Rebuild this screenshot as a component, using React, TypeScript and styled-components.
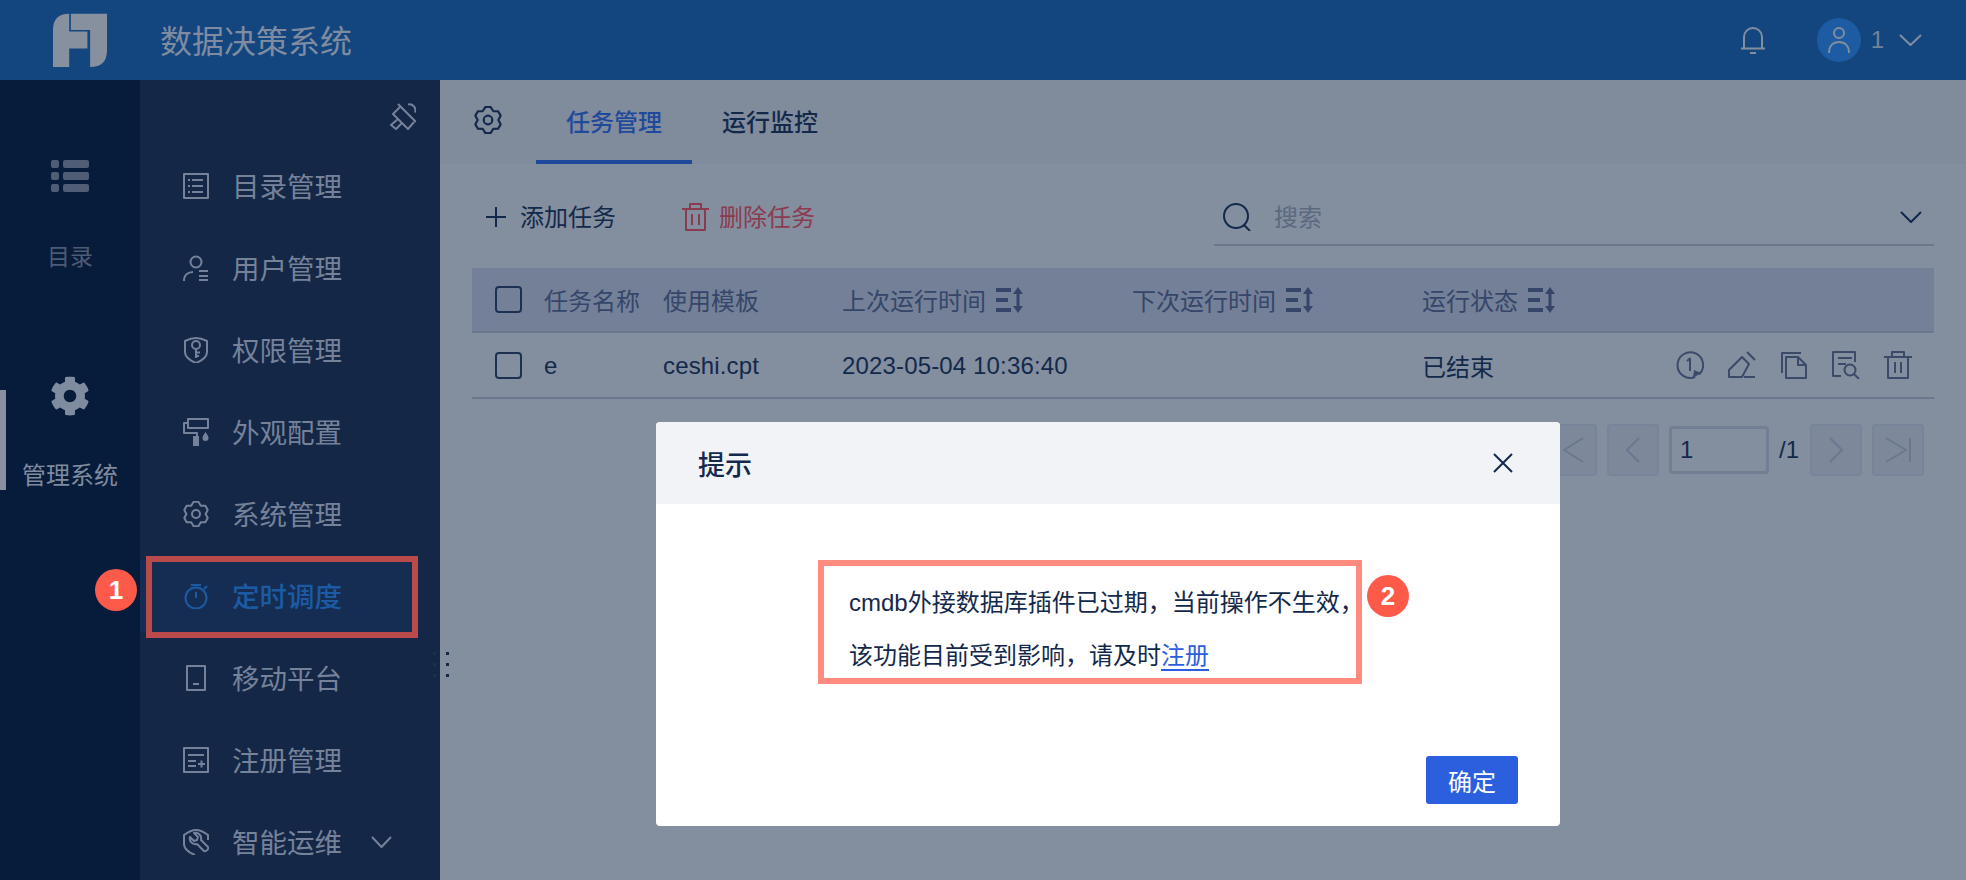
import React from "react";
import styled, { createGlobalStyle } from "styled-components";
import { FaCog } from "react-icons/fa";

const GlobalStyle = createGlobalStyle`
  html, body { margin: 0; padding: 0; background: #828d9e; }
  body { font-family: "Liberation Sans", "Noto Sans CJK SC", sans-serif; overflow: hidden; }
  * { box-sizing: border-box; }
`;

const Page = styled.div`
  position: relative;
  width: 1966px;
  height: 880px;
  display: flex;
  flex-direction: column;
  overflow: hidden;
`;

const TopBar = styled.header`
  height: 80px;
  flex: none;
  display: flex;
  align-items: center;
  background: #13467f;
  color: #828da0;
`;

const LogoBox = styled.div`
  width: 160px;
  padding-left: 53px;
  display: flex;
`;

const SystemName = styled.div`
  font-size: 32px;
  color: #7f8ba0;
  padding-bottom: 2px;
`;

const TopRight = styled.div`
  margin-left: auto;
  display: flex;
  align-items: center;
  padding-right: 44px;
`;

const Avatar = styled.div`
  width: 44px;
  height: 44px;
  margin-left: 51px;
  border-radius: 50%;
  background: #1d5ba2;
  display: flex;
  align-items: center;
  justify-content: center;
`;

const UserName = styled.span`
  font-size: 24px;
  color: #73829b;
  margin: 0 15px 0 10px;
`;

const Main = styled.div`
  flex: 1;
  display: flex;
  min-height: 0;
`;

const Rail = styled.nav`
  width: 140px;
  flex: none;
  padding-top: 76px;
  background: #071b3a;
`;

const RailItem = styled.div<{ $active?: boolean }>`
  position: relative;
  height: 220px;
  display: flex;
  flex-direction: column;
  align-items: center;
  color: ${(p) => (p.$active ? "#7f8b9e" : "#4f5d75")};
`;

const RailIcon = styled.div`
  height: 40px;
  display: flex;
  align-items: center;
  justify-content: center;
`;

const RailLabel = styled.div<{ $active?: boolean }>`
  margin-top: ${(p) => (p.$active ? "46px" : "47px")};
  font-size: ${(p) => (p.$active ? "24px" : "23px")};
  line-height: 28px;
  color: ${(p) => (p.$active ? "#7f8b9e" : "#4d5b74")};
`;

const RailMark = styled.span`
  position: absolute;
  left: 0;
  top: 14px;
  width: 6px;
  height: 100px;
  background: #87919f;
`;

const SideMenu = styled.nav`
  position: relative;
  width: 300px;
  flex: none;
  background: #142747;
`;

const PinRow = styled.div`
  height: 70px;
  display: flex;
  justify-content: flex-end;
  align-items: flex-end;
  padding: 0 24px 20px 0;
  color: #75829a;
`;

const MenuList = styled.div`
  display: flex;
  flex-direction: column;
  gap: 10px;
`;

const MenuItem = styled.div<{ $active?: boolean }>`
  height: 72px;
  margin-right: 22px;
  display: flex;
  align-items: center;
  gap: 23px;
  padding-left: 43px;
  font-size: 27.5px;
  font-weight: ${(p) => (p.$active ? 500 : 400)};
  color: ${(p) => (p.$active ? "#1c5ba3" : "#75829a")};
  background: ${(p) => (p.$active ? "#152d53" : "transparent")};
`;

const MenuLabel = styled.span`
  padding-bottom: 3px;
`;

const MenuChevron = styled.span`
  display: flex;
  margin-left: 6px;
`;

const MarkBox = styled.div<{ $color: string }>`
  position: absolute;
  border: 6px solid ${(p) => p.$color};
  pointer-events: none;
`;

const SideMark = styled(MarkBox)`
  left: 6px;
  top: 476px;
  width: 272px;
  height: 82px;
`;

const Badge = styled.div`
  position: absolute;
  width: 42px;
  height: 42px;
  border-radius: 50%;
  background: #fd5a4a;
  color: #fff;
  font-size: 26px;
  font-weight: 700;
  display: flex;
  align-items: center;
  justify-content: center;
`;

const BadgeOne = styled(Badge)`
  left: -45px;
  top: 489px;
`;

const BadgeTwo = styled(Badge)`
  left: 711px;
  top: 71px;
`;

const Handle = styled.div`
  position: absolute;
  left: 293px;
  top: 572px;
  display: grid;
  grid-template-columns: 3px 3px;
  column-gap: 10px;
  row-gap: 8px;
`;

const HandleDot = styled.i<{ $dim?: boolean }>`
  display: block;
  width: 3px;
  height: 3px;
  background: ${(p) => (p.$dim ? "#1d3050" : "#13294b")};
`;

const Content = styled.main`
  flex: 1;
  min-width: 0;
  background: #838e9f;
  color: #13294b;
`;

const TabBar = styled.div`
  height: 84px;
  display: flex;
  padding-left: 34px;
  background: #808b9c;
`;

const TabGear = styled.div`
  width: 62px;
  display: flex;
  align-items: center;
  padding-bottom: 4px;
`;

const Tab = styled.div<{ $active?: boolean }>`
  width: 156px;
  display: flex;
  align-items: center;
  justify-content: center;
  font-size: 24px;
  font-weight: 500;
  color: ${(p) => (p.$active ? "#1f4a9c" : "#13294b")};
  border-bottom: 4px solid ${(p) => (p.$active ? "#1f4a9c" : "transparent")};
`;

const Body = styled.div`
  padding: 0 32px;
`;

const Toolbar = styled.div`
  height: 104px;
  padding-top: 26px;
  display: flex;
  align-items: flex-start;
`;

const ToolButton = styled.div<{ $danger?: boolean; $gap: number }>`
  height: 54px;
  display: flex;
  align-items: center;
  gap: ${(p) => p.$gap}px;
  font-size: 24px;
  color: ${(p) => (p.$danger ? "#8b3b50" : "#13294b")};
`;

const ToolLabel = styled.span`
  padding-bottom: 4px;
`;

const AddButton = styled(ToolButton)`
  margin-left: 14px;
`;

const DeleteButton = styled(ToolButton)`
  margin-left: 66px;
`;

const SearchBox = styled.div`
  margin-left: auto;
  width: 720px;
  height: 56px;
  display: flex;
  align-items: center;
  gap: 22px;
  padding: 0 12px 0 9px;
  border-bottom: 2px solid #6b778d;
  font-size: 24px;
  color: #13294b;
`;

const SearchHint = styled(ToolLabel)`
  color: #5c697f;
`;

const SearchChevron = styled.span`
  display: flex;
  margin-left: auto;
`;

const Row = styled.div<{ $head?: boolean }>`
  display: grid;
  grid-template-columns: 72px 119px 179px 290px 290px 254px 1fr;
  align-items: center;
  height: ${(p) => (p.$head ? "65px" : "66px")};
  font-size: 24px;
  color: ${(p) => (p.$head ? "#36466a" : "#13294b")};
  background: ${(p) => (p.$head ? "#738097" : "transparent")};
  border-bottom: 2px solid #6b778d;
`;

const LatinCell = styled.div`
  padding-top: 2px;
  letter-spacing: 0.15px;
`;

const Check = styled.span`
  display: block;
  width: 27px;
  height: 27px;
  margin-left: 23px;
  border: 2px solid #1c3052;
  border-radius: 4px;
`;

const SortCell = styled.div`
  display: flex;
  align-items: center;
  gap: 10px;
`;

const RowActions = styled.div`
  display: flex;
  gap: 24px;
  color: #3a4a68;
`;

const Pager = styled.div`
  margin-top: 25px;
  padding-right: 10px;
  display: flex;
  justify-content: flex-end;
  align-items: center;
  gap: 10px;
  font-size: 24px;
`;

const PageButton = styled.div`
  width: 52px;
  height: 52px;
  display: flex;
  align-items: center;
  justify-content: center;
  background: #7d899b;
  border: 2px solid #77849a;
  border-radius: 4px;
  color: #6a778e;
`;

const PageInput = styled.div`
  width: 100px;
  height: 48px;
  padding-left: 8px;
  display: flex;
  align-items: center;
  border: 3px solid #727e93;
  border-radius: 4px;
`;

const PageTotal = styled.span`
  width: 21px;
`;

const Modal = styled.section`
  position: absolute;
  left: 656px;
  top: 422px;
  width: 904px;
  height: 404px;
  display: flex;
  flex-direction: column;
  background: #fff;
  border-radius: 4px;
  color: #13294b;
`;

const ModalHead = styled.div`
  height: 82px;
  flex: none;
  padding: 0 47px 0 42px;
  display: flex;
  align-items: center;
  justify-content: space-between;
  background: #f2f3f7;
  border-radius: 4px 4px 0 0;
  font-size: 27px;
  font-weight: 500;
`;

const ModalBody = styled.div`
  position: relative;
  padding: 56px 0 0 162px;
`;

const Callout = styled(MarkBox)`
  position: static;
  width: 544px;
  height: 124px;
  padding: 10px 0 0 25px;
  font-size: 24px;
  line-height: 53px;
  white-space: nowrap;
`;

const RegisterLink = styled.span`
  color: #2b5fdd;
  border-bottom: 2px solid #2b5fdd;
`;

const ModalFoot = styled.div`
  margin-top: auto;
  padding: 0 42px 22px 0;
  display: flex;
  justify-content: flex-end;
`;

const Confirm = styled.div`
  width: 92px;
  height: 48px;
  display: flex;
  align-items: center;
  justify-content: center;
  background: #2b5fdd;
  border-radius: 3px;
  color: #fff;
  font-size: 24px;
`;

const Glyph = styled.svg`
  display: block;
  flex: none;
  fill: none;
  stroke: currentColor;
  stroke-width: 2;
  stroke-linejoin: round;
`;

const Solid = styled.g`
  fill: currentColor;
  stroke: none;
`;

type IconProps = { children: React.ReactNode; w?: number; h?: number };

const Icon = ({ children, w = 26, h = 26 }: IconProps) => (
  <Glyph width={w} height={h} viewBox={`0 0 ${w} ${h}`}>
    {children}
  </Glyph>
);

const Logo = () => (
  <svg width="54" height="54" viewBox="0 0 160 160" fill="#87909f">
    <path d="M0 160V50Q0 2 48 2V55H102V105H48V160Z" />
    <path d="M53 2H160V110Q160 160 110 160V50H53Z" />
  </svg>
);

const Chevron = ({ w = 22, h = 12 }: { w?: number; h?: number }) => (
  <Icon w={w} h={h}>
    <path d={`M1 1L${w / 2} ${h - 1}L${w - 1} 1`} />
  </Icon>
);

const ListSolid = () => (
  <Icon w={38} h={32}>
    <Solid>
      <rect x="0" y="0" width="8" height="8" rx="2" />
      <rect x="0" y="12" width="8" height="8" rx="2" />
      <rect x="0" y="24" width="8" height="8" rx="2" />
      <rect x="12" y="0" width="26" height="8" rx="2" />
      <rect x="12" y="12" width="26" height="8" rx="2" />
      <rect x="12" y="24" width="26" height="8" rx="2" />
    </Solid>
  </Icon>
);

// six-lobed gear outline, lobes at top and bottom
const gearPath = (() => {
  const pts: string[] = [];
  for (let i = 0; i < 6; i++) {
    const a = -90 + i * 60;
    [
      [a - 30, 9.6],
      [a - 11, 12.4],
      [a + 11, 12.4],
    ].forEach(([deg, r]) => {
      const rad = (deg * Math.PI) / 180;
      pts.push(`${(13 + r * Math.cos(rad)).toFixed(2)} ${(13 + r * Math.sin(rad)).toFixed(2)}`);
    });
  }
  return `M${pts.join("L")}Z`;
})();

const GearLine = ({ size = 26 }: { size?: number }) => (
  <Glyph width={size} height={size} viewBox="0 0 26 26">
    <path d={gearPath} />
    <circle cx="13" cy="13" r="4" />
  </Glyph>
);

const MenuIcons: Record<string, React.ReactNode> = {
  dir: (
    <Icon>
      <rect x="1" y="1" width="24" height="24" />
      <path d="M9 7h11M9 13h11M9 19h11M5 7h2M5 13h2M5 19h2" />
    </Icon>
  ),
  user: (
    <Icon>
      <circle cx="13" cy="7" r="5.500" />
      <path d="M1 26c0-6 4-9 9-9M16 16h9M16 21h9M16 25h9" />
    </Icon>
  ),
  auth: (
    <Icon>
      <path d="M13 1c4 0 7 1 11 3v11c0 5-6 9-11 11-5-2-11-6-11-11V4c4-2 7-3 11-3z" />
      <circle cx="13" cy="8" r="4" />
      <path d="M13 12v9M13 15.500h4M13 19h3" />
    </Icon>
  ),
  look: (
    <Icon w={26} h={28}>
      <path d="M5 1h20v9H5zM5 5H1v10h13v3" />
      <Solid>
        <rect x="10" y="18" width="6" height="10" />
        <path d="M22.500 14c2 3 3 4.500 3 6a3 3 0 0 1-6 0c0-1.500 1-3 3-6z" />
      </Solid>
    </Icon>
  ),
  sys: <GearLine />,
  time: (
    <Icon>
      <circle cx="13" cy="15" r="10.500" />
      <path d="M8 2h10M13 9v6M21 6l3-3" />
    </Icon>
  ),
  mobile: (
    <Icon>
      <rect x="4" y="1" width="18" height="24" />
      <path d="M10 19h6" />
    </Icon>
  ),
  reg: (
    <Icon>
      <rect x="1" y="1" width="24" height="24" />
      <path d="M5 8h16M5 14h8M5 19h8M15 17h7M18.500 13.500v7" />
    </Icon>
  ),
  ops: (
    <Icon>
      <path d="M25 11V6C21 3 17 1 13 1S5 3 1 6v9c0 5 6 9 11 11" />
      <path d="M7 8l4 4 3-1 1-3-4-4c4-1 8 2 7 7l7 7c1 2-2 5-4 4l-7-7c-5 1-8-3-7-7z" />
    </Icon>
  ),
};

const menu = [
  { key: "dir", label: "目录管理" },
  { key: "user", label: "用户管理" },
  { key: "auth", label: "权限管理" },
  { key: "look", label: "外观配置" },
  { key: "sys", label: "系统管理" },
  { key: "time", label: "定时调度", active: true },
  { key: "mobile", label: "移动平台" },
  { key: "reg", label: "注册管理" },
  { key: "ops", label: "智能运维", more: true },
];

const SortIcon = () => (
  <Icon w={27} h={26}>
    <Solid>
      <rect x="0" y="1" width="15" height="4" />
      <rect x="0" y="11" width="12" height="4" />
      <rect x="0" y="21" width="15" height="4" />
      <path d="M22 0l5 7h-3.500v12H27l-5 7-5-7h3.500V7H17z" />
    </Solid>
  </Icon>
);

const rowActions = [
  <Icon key="run" w={28} h={28}>
    <path d="M19 26a12.800 12.800 0 1 1 4-2.500" />
    <path d="M11 10l3-2.500V20" />
    <Solid>
      <path d="M17 27l1-8 7 3z" />
    </Solid>
  </Icon>,
  <Icon key="edit" w={28} h={28}>
    <path d="M1 19L14 6l7 7-7 13H1zM19 1l8 8M16 26h11" />
  </Icon>,
  <Icon key="copy" w={28} h={28}>
    <path d="M21 2H2v20M6 6h12l8 8v13H6zM18 6v8h8" />
  </Icon>,
  <Icon key="find" w={28} h={28}>
    <path d="M9 25H1V1h22v10M6 7h14M6 13h8" />
    <circle cx="18" cy="19" r="5.500" />
    <path d="M22 23l5 5" />
  </Icon>,
  <Icon key="trash" w={28} h={28}>
    <path d="M0 6h28M8 6V1h12v5M4 6v21h20V6M11 11v11M17 11v11" />
  </Icon>,
];

export default function App() {
  return (
    <Page>
      <GlobalStyle />
      <TopBar>
        <LogoBox>
          <Logo />
        </LogoBox>
        <SystemName>数据决策系统</SystemName>
        <TopRight>
          <Icon w={26} h={28}>
            <path d="M4 22V11a9 9 0 0 1 18 0v11M1 22.500h24M10 27h6" />
          </Icon>
          <Avatar>
            <Icon w={22} h={27}>
              <circle cx="11" cy="6" r="5" />
              <path d="M1 26c0-7 4-11 10-11s10 4 10 11" />
            </Icon>
          </Avatar>
          <UserName>1</UserName>
          <Chevron w={23} h={12} />
        </TopRight>
      </TopBar>
      <Main>
        <Rail>
          <RailItem>
            <RailIcon>
              <ListSolid />
            </RailIcon>
            <RailLabel>目录</RailLabel>
          </RailItem>
          <RailItem $active>
            <RailMark />
            <RailIcon>
              <FaCog size={40} />
            </RailIcon>
            <RailLabel $active>管理系统</RailLabel>
          </RailItem>
        </Rail>
        <SideMenu>
          <PinRow>
            <Icon w={28} h={28}>
              <path d="M10 2l18 18M20 2.500a6 6 0 0 1 7 8M12 5l-7 7 15 15 6-7M10 17l-7 6 5 4 6-6" />
            </Icon>
          </PinRow>
          <MenuList>
            {menu.map((m) => (
              <MenuItem key={m.key} $active={m.active}>
                {MenuIcons[m.key]}
                <MenuLabel>{m.label}</MenuLabel>
                {m.more && (
                  <MenuChevron>
                    <Chevron w={21} h={12} />
                  </MenuChevron>
                )}
              </MenuItem>
            ))}
          </MenuList>
          <SideMark $color="#bb4a4a" />
          <BadgeOne>1</BadgeOne>
          <Handle>
            {Array.from({ length: 6 }).map((_, i) => (
              <HandleDot key={i} $dim={i % 2 === 0} />
            ))}
          </Handle>
        </SideMenu>
        <Content>
          <TabBar>
            <TabGear>
              <GearLine size={28} />
            </TabGear>
            <Tab $active>任务管理</Tab>
            <Tab>运行监控</Tab>
          </TabBar>
          <Body>
            <Toolbar>
              <AddButton $gap={14}>
                <Icon w={20} h={20}>
                  <path d="M10 0v20M0 10h20" />
                </Icon>
                <ToolLabel>添加任务</ToolLabel>
              </AddButton>
              <DeleteButton $danger $gap={10}>
                <Icon w={27} h={28}>
                  <path d="M0 6h27M8 6V1h11v5M4 6v21h19V6M10 11v11M17 11v11" />
                </Icon>
                <ToolLabel>删除任务</ToolLabel>
              </DeleteButton>
              <SearchBox>
                <Icon w={29} h={28}>
                  <circle cx="13" cy="13" r="12" />
                  <path d="M21 22l6 6" />
                </Icon>
                <SearchHint>搜索</SearchHint>
                <SearchChevron>
                  <Chevron w={22} h={12} />
                </SearchChevron>
              </SearchBox>
            </Toolbar>
            <Row $head>
              <Check />
              <div>任务名称</div>
              <div>使用模板</div>
              <SortCell>
                上次运行时间
                <SortIcon />
              </SortCell>
              <SortCell>
                下次运行时间
                <SortIcon />
              </SortCell>
              <SortCell>
                运行状态
                <SortIcon />
              </SortCell>
              <div />
            </Row>
            <Row>
              <Check />
              <LatinCell>e</LatinCell>
              <LatinCell>ceshi.cpt</LatinCell>
              <LatinCell>2023-05-04 10:36:40</LatinCell>
              <div />
              <div>已结束</div>
              <RowActions>{rowActions}</RowActions>
            </Row>
            <Pager>
              <PageButton>
                <Icon w={26} h={26}>
                  <path d="M1 1v24M25 1L6 13l19 12" />
                </Icon>
              </PageButton>
              <PageButton>
                <Icon w={14} h={26}>
                  <path d="M13 1L1 13l12 12" />
                </Icon>
              </PageButton>
              <PageInput>1</PageInput>
              <PageTotal>/1</PageTotal>
              <PageButton>
                <Icon w={14} h={26}>
                  <path d="M1 1l12 12L1 25" />
                </Icon>
              </PageButton>
              <PageButton>
                <Icon w={26} h={26}>
                  <path d="M1 1l20 12L1 25M25 1v24" />
                </Icon>
              </PageButton>
            </Pager>
          </Body>
        </Content>
      </Main>
      <Modal>
        <ModalHead>
          提示
          <Icon w={20} h={20}>
            <path d="M1 1l18 18M19 1L1 19" />
          </Icon>
        </ModalHead>
        <ModalBody>
          <Callout $color="#ff8a7e">
            cmdb外接数据库插件已过期，当前操作不生效，
            <br />
            该功能目前受到影响，请及时<RegisterLink>注册</RegisterLink>
          </Callout>
          <BadgeTwo>2</BadgeTwo>
        </ModalBody>
        <ModalFoot>
          <Confirm>确定</Confirm>
        </ModalFoot>
      </Modal>
    </Page>
  );
}
